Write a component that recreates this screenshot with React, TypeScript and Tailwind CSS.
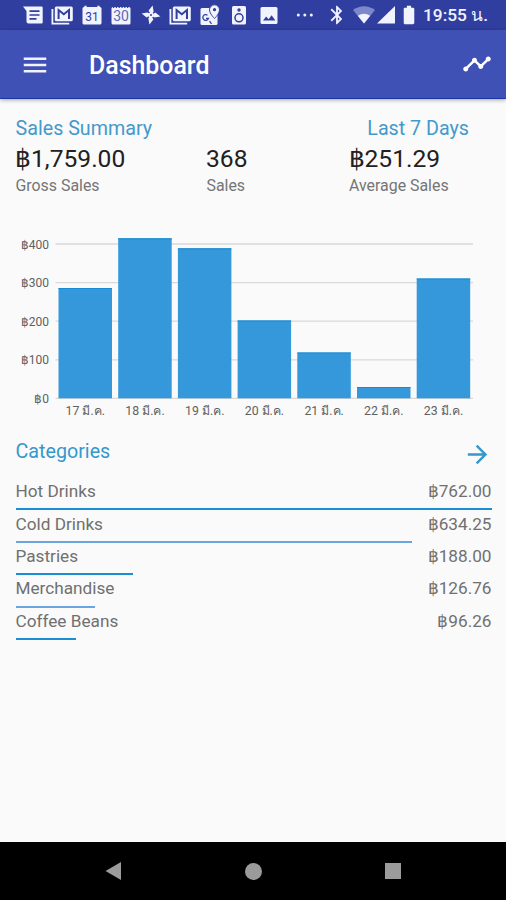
import type { ReactNode } from "react";
import { MdArrowForward, MdBatteryFull, MdBluetooth, MdMenu, MdTimeline } from "react-icons/md";

const STATS = [
  { value: "฿1,759.00", label: "Gross Sales", width: "w-[191px]" },
  { value: "368", label: "Sales", width: "w-[142.5px]" },
  { value: "฿251.29", label: "Average Sales", width: "w-[140px]" },
];

const DAYS = [
  { label: "17 มี.ค.", top: 288 },
  { label: "18 มี.ค.", top: 238.3 },
  { label: "19 มี.ค.", top: 248.3 },
  { label: "20 มี.ค.", top: 320.5 },
  { label: "21 มี.ค.", top: 352.5 },
  { label: "22 มี.ค.", top: 387 },
  { label: "23 มี.ค.", top: 278.5 },
];

const TICKS = ["฿400", "฿300", "฿200", "฿100", "฿0"];

const CATEGORIES = [
  { name: "Hot Drinks", amount: "฿762.00", width: 476, color: "bg-[#1b8fd3]" },
  { name: "Cold Drinks", amount: "฿634.25", width: 396, color: "bg-[#6aa5df]" },
  { name: "Pastries", amount: "฿188.00", width: 117, color: "bg-[#1b8fd3]" },
  { name: "Merchandise", amount: "฿126.76", width: 79, color: "bg-[#6aa5df]" },
  { name: "Coffee Beans", amount: "฿96.26", width: 60, color: "bg-[#1b8fd3]" },
];

function Slot({ children }: { children: ReactNode }) {
  return (
    <div className="w-[29.5px] flex justify-center shrink-0">
      <svg width="24" height="24" viewBox="0 0 24 24" fill="#f1f3ff">
        {children}
      </svg>
    </div>
  );
}

function MailStack() {
  return (
    <Slot>
      <path d="M2.4 6v14.6h16.8" fill="none" stroke="#f1f3ff" strokeWidth="1.8" />
      <rect x="4.8" y="3.5" width="18" height="14.8" rx="1.6" />
      <path d="M8.6 16V7l5.2 4.3L19 7v9" fill="none" stroke="#303f9f" strokeWidth="2" />
    </Slot>
  );
}

function Calendar({ day, outlined }: { day: string; outlined?: boolean }) {
  return (
    <Slot>
      <rect x="2.5" y="4" width="19" height="17.5" rx="1.5" />
      {outlined ? (
        <path d="M4 4h16" stroke="#303f9f" strokeWidth="2" strokeDasharray="1.3 1.5" />
      ) : (
        <path d="M5.5 2.7v3M18.5 2.7v3" stroke="#f1f3ff" strokeWidth="2.2" />
      )}
      <text
        x="12"
        y="18"
        textAnchor="middle"
        fontSize={outlined ? "14" : "12"}
        fill={outlined ? "#5c69b5" : "#303f9f"}
      >
        {day}
      </text>
    </Slot>
  );
}

function StatusBar() {
  return (
    <div className="h-[30px] bg-[#303f9f] flex items-center pl-[18px] text-[#f1f3ff]">
      <Slot>
        <path d="M2 3.5h18.5a1.2 1.2 0 0 1 1.2 1.2v14.6a1.2 1.2 0 0 1-1.2 1.2h-13a2 2 0 0 1-2-2V8z" />
        <path d="M8.5 8.2h10M8.5 12h10M8.5 15.8h7" stroke="#303f9f" strokeWidth="1.7" />
      </Slot>
      <MailStack />
      <Calendar day="31" />
      <Calendar day="30" outlined />
      <Slot>
        {/* pinwheel: one blade turned four times */}
        {[0, 90, 180, 270].map((deg) => (
          <path key={deg} d="M12.5 12.5L9.6 7.6L13.6 2.6L14.6 8.4z" transform={`rotate(${deg} 12 12)`} />
        ))}
        <circle cx="12" cy="12" r="2.6" />
        <circle cx="12" cy="12" r="1" fill="#303f9f" />
      </Slot>
      <MailStack />
      <Slot>
        <rect x="2.5" y="5" width="17" height="17" rx="1.5" />
        <path d="M16.5 1.8a5 5 0 0 0-5 5c0 3.8 5 8.7 5 8.7s5-4.9 5-8.7a5 5 0 0 0-5-5z" stroke="#303f9f" strokeWidth="1" />
        <circle cx="16.5" cy="6.7" r="1.6" fill="#303f9f" />
        <path d="M9.5 12.2a2.9 2.9 0 1 0 1 3.2H8M13.5 21l-2-3" fill="none" stroke="#303f9f" strokeWidth="1.3" />
      </Slot>
      <Slot>
        <rect x="5" y="3" width="14" height="18.5" rx="1.5" />
        <circle cx="12" cy="7" r="1.7" fill="#303f9f" />
        <circle cx="12" cy="14.8" r="4" fill="none" stroke="#303f9f" strokeWidth="1.5" />
      </Slot>
      <Slot>
        <rect x="3.5" y="4" width="17" height="17" rx="1.5" />
        <path d="M6 17.5l3.2-4 2.4 2.8 3-4 3.8 5.2z" fill="#303f9f" />
      </Slot>
      <svg className="ml-[12px] shrink-0" width="18" height="6" viewBox="0 0 18 6" fill="currentColor">
        <circle cx="2.3" cy="3" r="1.5" />
        <circle cx="8.8" cy="3" r="1.5" />
        <circle cx="15.3" cy="3" r="1.5" />
      </svg>
      <MdBluetooth className="ml-[12.5px] shrink-0" size={22} />
      <svg className="ml-[4.5px] shrink-0" width="22" height="18" viewBox="0 0 22 18">
        <path d="M0 4Q11-3.5 22 4L11 17.5z" fill="#7d88cb" />
        <path d="M4.8 9.8Q11 5.8 17.2 9.8L11 17.5z" fill="#f1f3ff" />
      </svg>
      <svg className="ml-[2px] shrink-0" width="18" height="18" viewBox="0 0 18 18" fill="currentColor">
        <path d="M0 17.5L18 0v17.5z" />
      </svg>
      <MdBatteryFull className="ml-[3px] shrink-0 scale-x-115" size={22} />
      <span className="ml-[3.5px] pt-[2px] text-[17.3px] font-medium whitespace-nowrap">19:55 น.</span>
    </div>
  );
}

function SalesChart() {
  return (
    <svg className="block" width="506" height="200" viewBox="0 225 506 200">
      {TICKS.map((t, i) => (
        <g key={t}>
          <path d={`M55.5 ${244 + i * 38.6}H473`} stroke="#d9d9d9" strokeWidth="1.3" />
          <text x="49" y={248.6 + i * 38.6} textAnchor="end" fontSize="12" fill="#606060">
            {t}
          </text>
        </g>
      ))}
      {DAYS.map((d, i) => (
        <g key={d.label}>
          <rect x={58.5 + i * 59.7} y={d.top} width="53.5" height={398.3 - d.top} fill="#3498db" />
          <path d={`M${58.5 + i * 59.7} ${d.top + 0.5}h53.5`} stroke="#168bd2" />
          <text x={85.3 + i * 59.7} y="415" textAnchor="middle" fontSize="12.3" fill="#606060">
            {d.label}
          </text>
        </g>
      ))}
    </svg>
  );
}

export default function App() {
  return (
    <div className="w-[506px] h-[900px] flex flex-col overflow-hidden bg-[#fafafa] font-['Roboto','Noto_Sans',sans-serif]">
      <StatusBar />
      <header className="h-[69px] shrink-0 bg-[#3f51b5] border-b border-[#1c36a8] shadow-[0_1px_4px_rgba(0,0,0,0.35)] flex items-center pl-[20px] pr-[14px] text-white">
        <MdMenu className="text-[#f1f3ff] mt-px" size={30} />
        <h1 className="ml-[39px] pt-[3px] text-[24.9px] font-medium">Dashboard</h1>
        <MdTimeline className="ml-auto" size={30} />
      </header>

      <main className="flex-1">
        <section className="h-[126px] pt-[18px] px-[15.5px]">
          <div className="flex justify-between pr-[21.5px] text-[19.7px] leading-[24px] text-[#4499cb]">
            <h2>Sales Summary</h2>
            <span>Last 7 Days</span>
          </div>
          <div className="flex">
            {STATS.map((s) => (
              <div key={s.label} className={`${s.width} shrink-0`}>
                <p className="pt-[3px] -ml-[0.5px] text-[24.6px] leading-[30px] text-[#212121]">{s.value}</p>
                <p className="text-[15.9px] leading-[24px] text-[#757575]">{s.label}</p>
              </div>
            ))}
          </div>
        </section>

        <SalesChart />

        <section className="pl-[15.5px] pr-[14.5px] pt-[12px]">
          <div className="flex justify-between items-center h-[34px] text-[#3498cb]">
            <h2 className="text-[19.7px] leading-[24px] pb-[4px]">Categories</h2>
            <MdArrowForward size={29} />
          </div>
          <ul className="pt-[7px]">
            {CATEGORIES.map((c) => (
              <li key={c.name} className="h-[32.4px] flex flex-col justify-between pt-[2.2px]">
                <div className="flex justify-between text-[17.2px] leading-[22px] text-[#707070]">
                  <span>{c.name}</span>
                  <span>{c.amount}</span>
                </div>
                <div className={`h-[2px] ${c.color}`} style={{ width: c.width }} />
              </li>
            ))}
          </ul>
        </section>
      </main>

      <nav className="h-[58px] shrink-0 bg-black flex items-center justify-between pl-[105px] pr-[105px]">
        <svg width="17" height="18" viewBox="0 0 17 18" fill="#9b9b9b">
          <path d="M.5 9L16 0v18z" />
        </svg>
        <div className="size-[17px] rounded-full bg-[#9b9b9b]" />
        <div className="size-[16px] bg-[#9b9b9b]" />
      </nav>
    </div>
  );
}
